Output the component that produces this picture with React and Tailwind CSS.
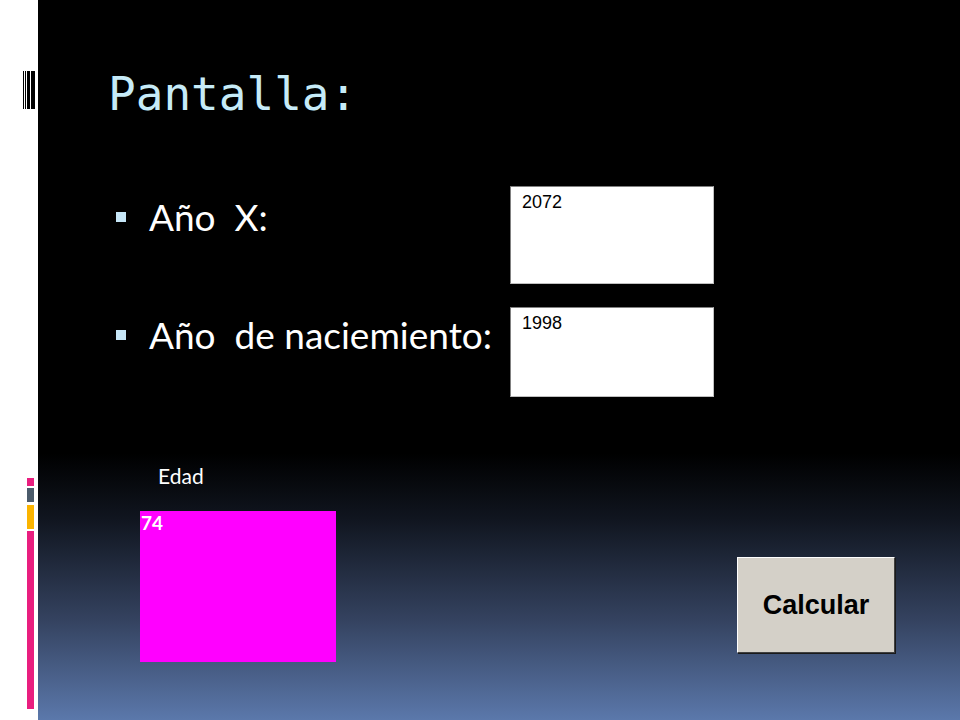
import React from 'react';

const Barcode = () => (
  <div className="ml-[23px] mt-[71px] flex h-[38px] w-[15px] bg-white">
    <div className="w-px bg-black" />
    <div className="ml-px w-px bg-black" />
    <div className="ml-px w-[3px] bg-black" />
    <div className="ml-px w-[4px] bg-black" />
  </div>
);

const SideBars = () => (
  <div className="ml-[27px] mt-[369px] flex w-[7px] flex-col">
    <div className="h-[8px] bg-[#e91e7f]" />
    <div className="mt-[2px] h-[14px] bg-[#4b5b6b]" />
    <div className="mt-[3px] h-[24px] bg-[#fbb400]" />
    <div className="mt-[2px] h-[178px] bg-[#e91e7f]" />
  </div>
);

const InputBox = ({ value, className }) => (
  <div
    className={`w-[204px] border border-t-[#808080] border-l-[#808080] border-b-[#c0c0c0] border-r-[#c0c0c0] bg-white pl-[11px] pt-[4px] text-[18px] leading-[22px] text-black ${className}`}
    style={{ fontFamily: '"Liberation Sans", Arial, sans-serif' }}
  >
    {value}
  </div>
);

const Bullet = ({ children }) => (
  <div className="flex items-center">
    <span className="ml-[8px] h-[10px] w-[10px] bg-[#c6e6f7]" />
    <span className="ml-[23px] text-[37px] leading-none text-white">{children}</span>
  </div>
);

export default function App() {
  return (
    <div
      className="flex h-[720px] w-[960px] overflow-hidden bg-white"
      style={{ fontFamily: 'Lato, "Open Sans", sans-serif' }}
    >
      <div className="flex w-[38px] flex-col">
        <Barcode />
        <SideBars />
      </div>

      <div className="flex flex-1 flex-col bg-[linear-gradient(to_bottom,#000_0%,#000_63%,#10151f_72%,#34425f_86%,#5b78ab_100%)] pl-[70px]">
        <h1
          className="mt-[67px] text-[46px] leading-[54px] text-[#c6ebf8]"
          style={{ fontFamily: '"DejaVu Sans Mono", "Liberation Mono", monospace' }}
        >
          Pantalla:
        </h1>

        <div className="mt-[65px] flex items-start">
          <div className="mt-[12px] w-[402px]">
            <Bullet>Año&nbsp; X:</Bullet>
          </div>
          <InputBox value="2072" className="h-[98px]" />
        </div>

        <div className="mt-[23px] flex items-start">
          <div className="mt-[9px] w-[402px]">
            <Bullet>Año&nbsp; de naciemiento:</Bullet>
          </div>
          <InputBox value="1998" className="h-[90px]" />
        </div>

        <div className="mt-[66px] flex items-start">
          <div className="ml-[32px] flex flex-col">
            <span className="ml-[18px] text-[21px] leading-[25px] text-white">Edad</span>
            <div className="mt-[23px] h-[151px] w-[196px] bg-[#ff00ff] pl-[1px] pt-[1px] text-[19px] font-bold leading-[22px] text-white">
              74
            </div>
          </div>
          <button
            className="ml-[401px] mt-[94px] h-[96px] w-[158px] border border-t-white border-l-white border-b-[#404040] border-r-[#404040] bg-[#d4d0c8] text-[27px] font-bold text-black"
            style={{ fontFamily: '"Liberation Sans", Arial, sans-serif', boxShadow: '1px 1px 0 #1a1a1a' }}
          >
            Calcular
          </button>
        </div>
      </div>
    </div>
  );
}
